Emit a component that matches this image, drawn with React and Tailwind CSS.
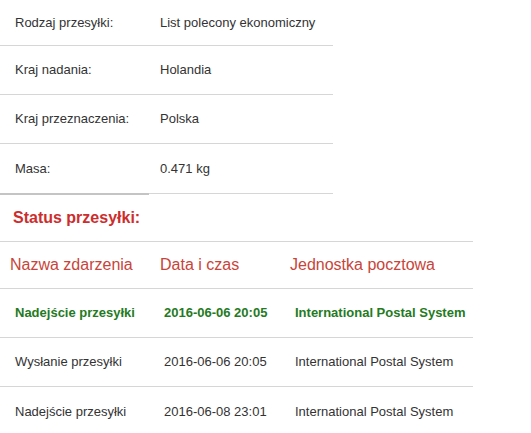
import React from 'react';

const info = [
  ['Rodzaj przesyłki:', 'List polecony ekonomiczny'],
  ['Kraj nadania:', 'Holandia'],
  ['Kraj przeznaczenia:', 'Polska'],
  ['Masa:', '0.471 kg'],
];

const events = [
  { name: 'Nadejście przesyłki', date: '2016-06-06 20:05', unit: 'International Postal System', active: true },
  { name: 'Wysłanie przesyłki', date: '2016-06-06 20:05', unit: 'International Postal System' },
  { name: 'Nadejście przesyłki', date: '2016-06-08 23:01', unit: 'International Postal System' },
];

const App = () => {
  return (
    <div className="bg-white w-[531px] h-[433px] overflow-hidden text-[13px] text-[#333]" style={{ fontFamily: '"Liberation Sans", Arial, sans-serif' }}>
      <div className="w-[333px]">
        {info.map(([k, v], i) => (
          <div key={k} className={`flex items-center ${i === 0 ? 'h-[46px]' : 'h-[49px]'} ${i < info.length - 1 ? 'border-b border-[#d6d6d6]' : ''}`}>
            <div className="w-[160px] pl-[15px]">{k}</div>
            <div className="flex-1">{v}</div>
          </div>
        ))}
        <div className="flex">
          <div className="w-[149px] h-[2px] bg-[#c4c4c4]" />
          <div className="flex-1 h-px bg-[#d6d6d6]" />
        </div>
      </div>

      <div className="h-[46px] flex items-center pl-[13px] text-[16px] font-bold text-[#cc2d2d]">
        Status przesyłki:
      </div>

      <div className="w-[473px] border-t border-[#d6d6d6]">
        <div className="flex items-center h-[47px] border-b border-[#d6d6d6] text-[16px] text-[#c8443a]">
          <div className="w-[160px] pl-[10px]">Nazwa zdarzenia</div>
          <div className="w-[130px]">Data i czas</div>
          <div className="flex-1">Jednostka pocztowa</div>
        </div>
        {events.map((e, i) => (
          <div key={i} className={`flex items-center h-[49px] ${i < events.length - 1 ? 'border-b border-[#d6d6d6]' : ''} ${e.active ? 'font-bold text-[#247a1e]' : ''}`}>
            <div className="w-[164px] pl-[15px]">{e.name}</div>
            <div className="w-[131px]">{e.date}</div>
            <div className="flex-1">{e.unit}</div>
          </div>
        ))}
      </div>
    </div>
  );
};

export default App;
